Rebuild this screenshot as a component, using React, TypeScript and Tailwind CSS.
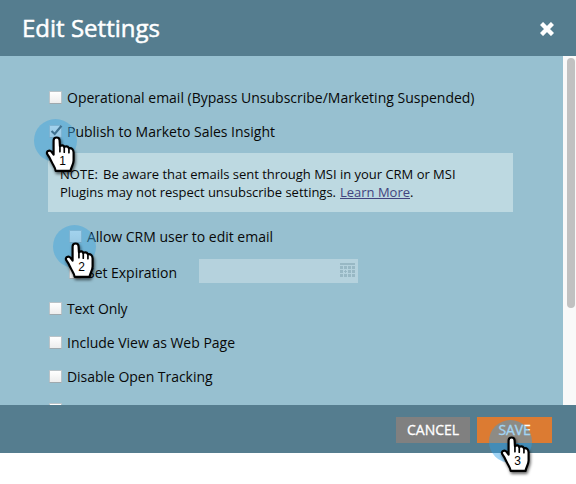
import React from 'react';

function Box({ checked = false }: { checked?: boolean }) {
  return (
    <span className="block h-[13px] w-[13px] shrink-0 rounded-[1px] border border-[#b9c3c8] border-b-[#9fa9ae] bg-linear-to-b from-white to-[#ededed]">
      {checked && (
        <svg viewBox="0 0 13 13" className="-mt-[2px] h-[13px] w-[13px] overflow-visible" fill="none" stroke="#3a3f45" strokeWidth="2.2">
          <path d="M1.5 7 L4.7 10 L11.5 1.8" />
        </svg>
      )}
    </span>
  );
}

function Row({ label, width, checked, className = '' }: { label: string; width: number; checked?: boolean; className?: string }) {
  return (
    <div className={`flex h-[34px] items-center gap-[5px] ${className}`}>
      <Box checked={checked} />
      <Label text={label} width={width} />
    </div>
  );
}

// Text run fitted to a fixed advance width.
function Label({ text, width, className = '' }: { text: string; width: number; className?: string }) {
  const ref = React.useRef<HTMLSpanElement>(null);
  React.useLayoutEffect(() => {
    const el = ref.current;
    if (!el) return;
    el.style.letterSpacing = '0px';
    const natural = el.getBoundingClientRect().width;
    el.style.letterSpacing = `${(width - natural) / text.length}px`;
  }, [text, width]);
  return (
    <span ref={ref} className={`whitespace-nowrap ${className}`}>
      {text}
    </span>
  );
}

function Pointer({ n, className }: { n: number; className: string }) {
  return (
    <div className={`pointer-events-none absolute h-[60px] w-[60px] ${className}`}>
      <svg viewBox="0 0 60 60" className="h-[60px] w-[60px] overflow-visible drop-shadow-[1px_2px_1.5px_rgba(0,0,0,0.6)]">
        <g transform="translate(31.6 26.2) scale(.3333)">
          <path
            d="M-9 10 C-9 -2 9 -2 9 10 L10 27 Q18 21 23 29 Q33 25 37 33 Q50 31 51 46 L51 70 C51 82 43 90 42 101 L-3 101 C-3 92 -11 84 -16 72 Q-22 59 -28 51 C-33 42 -21 37 -15 44 L-9 52 Z"
            fill="white" stroke="black" strokeWidth="6.5" strokeLinejoin="round"
          />
          <path d="M10 26 V44 M23 29 V45 M37 33 V47" stroke="black" strokeWidth="5" strokeLinecap="round" fill="none" />
        </g>
      </svg>
      <span className="absolute top-[43px] left-[34px] w-[7px] text-center font-['Liberation_Sans',sans-serif] text-[12px] leading-[14px] text-black">{n}</span>
    </div>
  );
}

function Halo({ className }: { className: string }) {
  return <span className={`absolute h-[43px] w-[43px] rounded-full ${className}`} />;
}

function CalendarIcon() {
  return (
    <svg viewBox="0 0 15 14" className="h-[14px] w-[15px]" fill="#98b8c4" shapeRendering="crispEdges">
      <rect width="15" height="2" />
      {[3, 7, 11].map((y) =>
        [0, 4, 8, 12].map((x) =>
          x === 4 && y === 7 ? (
            <path key="today" d="M5 7h1v1h1v1h-1v1h-1v-1h-1v-1h1z" />
          ) : (
            <rect key={`${x}-${y}`} x={x} y={y} width="3" height="3" />
          ),
        ),
      )}
    </svg>
  );
}

export default function App() {
  return (
    <div className="relative h-[484px] w-[576px] overflow-hidden bg-white font-['Open_Sans','Noto_Sans',sans-serif] text-[14px] text-[#080808]">
      <header className="flex h-[56px] items-center justify-between bg-[#557d8f] px-[22px] text-white">
        <h1 className="text-[24px] leading-[32px] font-normal [-webkit-text-stroke:0.5px_white]">
          <Label text="Edit Settings" width={138} />
        </h1>
        <svg viewBox="0 0 14 14" className="mt-[2px] h-[14px] w-[14px]" stroke="white" strokeWidth="4.4" fill="none">
          <path d="M1.5 1.5 L12.5 12.5 M12.5 1.5 L1.5 12.5" />
        </svg>
      </header>
      <div className="flex h-[349px]">
        <main className="h-full w-[563px] overflow-hidden bg-[#97c0d0] pt-[24px] pl-[49px]">
          <Row label="Operational email (Bypass Unsubscribe/Marketing Suspended)" width={407.5} />
          <Row label="Publish to Marketo Sales Insight" width={208} checked />
          <section className="mt-[5px] -ml-px h-[59px] w-[465px] bg-[#bdd9e1] pt-[12px] pl-[12px] text-[13px] leading-[18px]">
            <div className="flex">
              <Label text="NOTE:" width={38} />
              <Label text="Be aware that emails sent through MSI in your CRM or MSI" width={352.5} className="ml-[5px]" />
            </div>
            <div className="flex">
              <Label text="Plugins may not respect unsubscribe settings." width={276} />
              <Label text="Learn More" width={70} className="ml-[4px] text-[#42437f] underline" />
              <span>.</span>
            </div>
          </section>
          <Row label="Allow CRM user to edit email" width={186} className="mt-[7px] pl-[20px]" />
          <div className="mt-px flex h-[36px] items-center pt-px pl-[20px]">
            <Row label="Set Expiration" width={90} />
            <div className="mt-[-4px] ml-[22px] flex h-[24px] w-[159px] items-center justify-end bg-[#b5d2dd] pr-[3px] pb-[2px]">
              <CalendarIcon />
            </div>
          </div>
          <Row label="Text Only" width={60.5} className="mt-px" />
          <Row label="Include View as Web Page" width={168} />
          <Row label="Disable Open Tracking" width={145.5} />
          <div className="flex h-[32px] items-center">
            <Box />
          </div>
        </main>
        <div className="flex w-[13px] justify-end bg-[#f9f9f9] pt-[2px] pr-px">
          <span className="h-[250px] w-[8px] rounded-full bg-[#c1c1c1]" />
        </div>
      </div>
      <footer className="flex h-[48px] items-center justify-end gap-[7px] bg-[#557d8f] pr-[24px] text-white">
        <button className="mt-[2px] h-[26px] w-[74px] bg-[#808080] pb-[2px] [-webkit-text-stroke:0.3px_white]">
          <Label text="CANCEL" width={52} />
        </button>
        <button className="mt-[2px] h-[26px] w-[75px] bg-[#dc7b32] pb-[2px] [-webkit-text-stroke:0.3px_white]">
          <Label text="SAVE" width={32} />
        </button>
      </footer>
      <Halo className="top-[119px] left-[34px] bg-[#46a6dc]/50" />
      <Halo className="top-[225px] left-[53px] bg-[#46a6dc]/50" />
      <Halo className="top-[420px] left-[489px] bg-[#2f9fe8]/45" />
      <Pointer n={1} className="top-[111px] left-[25px]" />
      <Pointer n={2} className="top-[217px] left-[44px]" />
      <Pointer n={3} className="top-[411px] left-[480px]" />
    </div>
  );
}
